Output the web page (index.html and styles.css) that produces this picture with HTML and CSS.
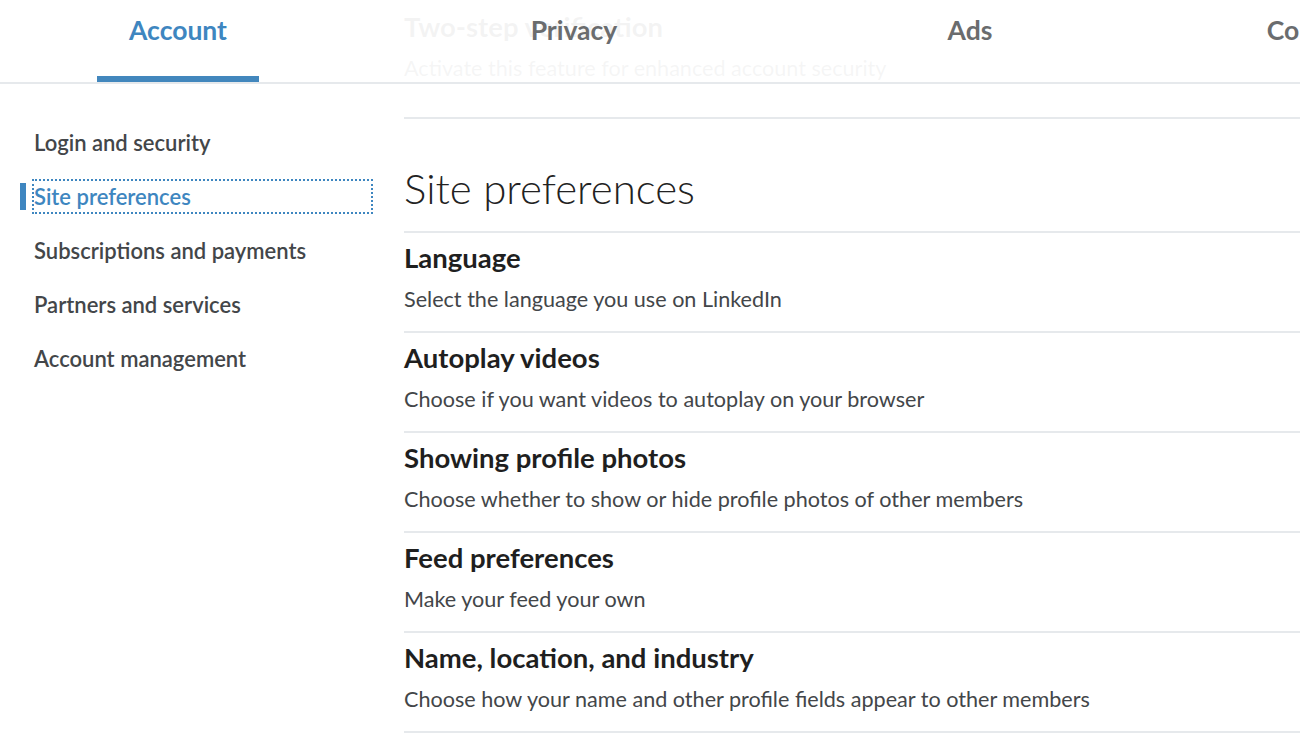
FILE: index.html
```html
<!DOCTYPE html>
<html lang="en">
<head>
<meta charset="utf-8">
<title>Settings – Site preferences</title>
<link rel="stylesheet" href="styles.css">
</head>
<body>
<header class="topbar">
  <nav class="tabs">
    <a class="tab tab-active" href="#"><span class="tab-label">Account</span></a>
    <a class="tab" href="#"><span class="tab-label">Privacy</span></a>
    <a class="tab" href="#"><span class="tab-label">Ads</span></a>
    <a class="tab" href="#"><span class="tab-label">Communications</span></a>
  </nav>
</header>
<div class="page">
  <aside class="sidebar">
    <ul class="side-nav">
      <li class="side-item"><a class="side-link" href="#">Login and security</a></li>
      <li class="side-item side-item-active"><a class="side-link" href="#">Site preferences</a></li>
      <li class="side-item"><a class="side-link" href="#">Subscriptions and payments</a></li>
      <li class="side-item"><a class="side-link" href="#">Partners and services</a></li>
      <li class="side-item"><a class="side-link" href="#">Account management</a></li>
    </ul>
  </aside>
  <main class="main">
    <section class="setting setting-first">
      <h3 class="setting-title">Two-step verification</h3>
      <p class="setting-desc">Activate this feature for enhanced account security</p>
    </section>
    <h2 class="section-heading">Site preferences</h2>
    <section class="setting">
      <h3 class="setting-title">Language</h3>
      <p class="setting-desc">Select the language you use on LinkedIn</p>
    </section>
    <section class="setting">
      <h3 class="setting-title">Autoplay videos</h3>
      <p class="setting-desc">Choose if you want videos to autoplay on your browser</p>
    </section>
    <section class="setting">
      <h3 class="setting-title">Showing profile photos</h3>
      <p class="setting-desc">Choose whether to show or hide profile photos of other members</p>
    </section>
    <section class="setting">
      <h3 class="setting-title">Feed preferences</h3>
      <p class="setting-desc">Make your feed your own</p>
    </section>
    <section class="setting">
      <h3 class="setting-title">Name, location, and industry</h3>
      <p class="setting-desc">Choose how your name and other profile fields appear to other members</p>
    </section>
  </main>
</div>
</body>
</html>
```

FILE: styles.css
```css
html, body {
  margin: 0;
  padding: 0;
  background: #ffffff;
}

body {
  font-family: "Lato", "Liberation Sans", sans-serif;
  color: #222222;
  width: 1300px;
  height: 748px;
  overflow: hidden;
  position: relative;
}

/* ---------- top tab bar (overlays scrolled content) ---------- */
.topbar {
  position: absolute;
  top: 0;
  left: 0;
  right: 0;
  height: 82px;
  background: rgba(255, 255, 255, 0.95);
  border-bottom: 2px solid #e6e9ec;
  overflow: hidden;
  z-index: 2;
}

.tabs {
  display: flex;
  margin-left: -20px;
  height: 82px;
}

.tab {
  flex: 0 0 396px;
  display: flex;
  justify-content: center;
  text-decoration: none;
  color: #6a6c6e;
  white-space: nowrap;
}

.tab-label {
  display: block;
  height: 82px;
  box-sizing: border-box;
  padding: 13px 32px 0;
  font-size: 26.5px;
  line-height: 34px;
  font-weight: 700;
}

.tab-active {
  color: #3e86c0;
}

.tab-active .tab-label {
  border-bottom: 6px solid #4287bd;
}

/* ---------- page ---------- */
.page {
  display: flex;
}

.sidebar {
  flex: 0 0 404px;
  padding-top: 116px;
}

.side-nav {
  list-style: none;
  margin: 0 0 0 20px;
  padding: 0;
  width: 351px;
}

.side-item {
  position: relative;
  padding: 11px 0 12px 14px;
}

.side-link {
  display: block;
  height: 31px;
  line-height: 31px;
  font-size: 22px;
  font-weight: 600;
  color: #434649;
  text-decoration: none;
  white-space: nowrap;
}

.side-item-active .side-link {
  color: #3e86c0;
  outline: 2px dotted #3e86c0;
}

.side-item-active::before {
  content: "";
  position: absolute;
  left: 0;
  top: 13px;
  width: 6px;
  height: 27px;
  background: #3e86c0;
}

/* ---------- main column ---------- */
.main {
  flex: 1;
  min-width: 0;
}

.setting {
  border-bottom: 2px solid #e6e9ec;
  padding: 9px 0 18px;
}

.setting-first {
  padding: 11px 0 35px;
}

.setting-title {
  margin: 0;
  font-size: 27.5px;
  line-height: 32px;
  font-weight: 700;
  color: #1f1f1f;
  white-space: nowrap;
}

.setting-desc {
  margin: 11px 0 0;
  font-size: 21.6px;
  line-height: 28px;
  font-weight: 400;
  color: #434649;
  white-space: nowrap;
}

.section-heading {
  margin: 0;
  padding: 45px 0 19px;
  font-size: 42px;
  line-height: 48px;
  font-weight: 300;
  color: #222222;
  border-bottom: 2px solid #e6e9ec;
}
```
